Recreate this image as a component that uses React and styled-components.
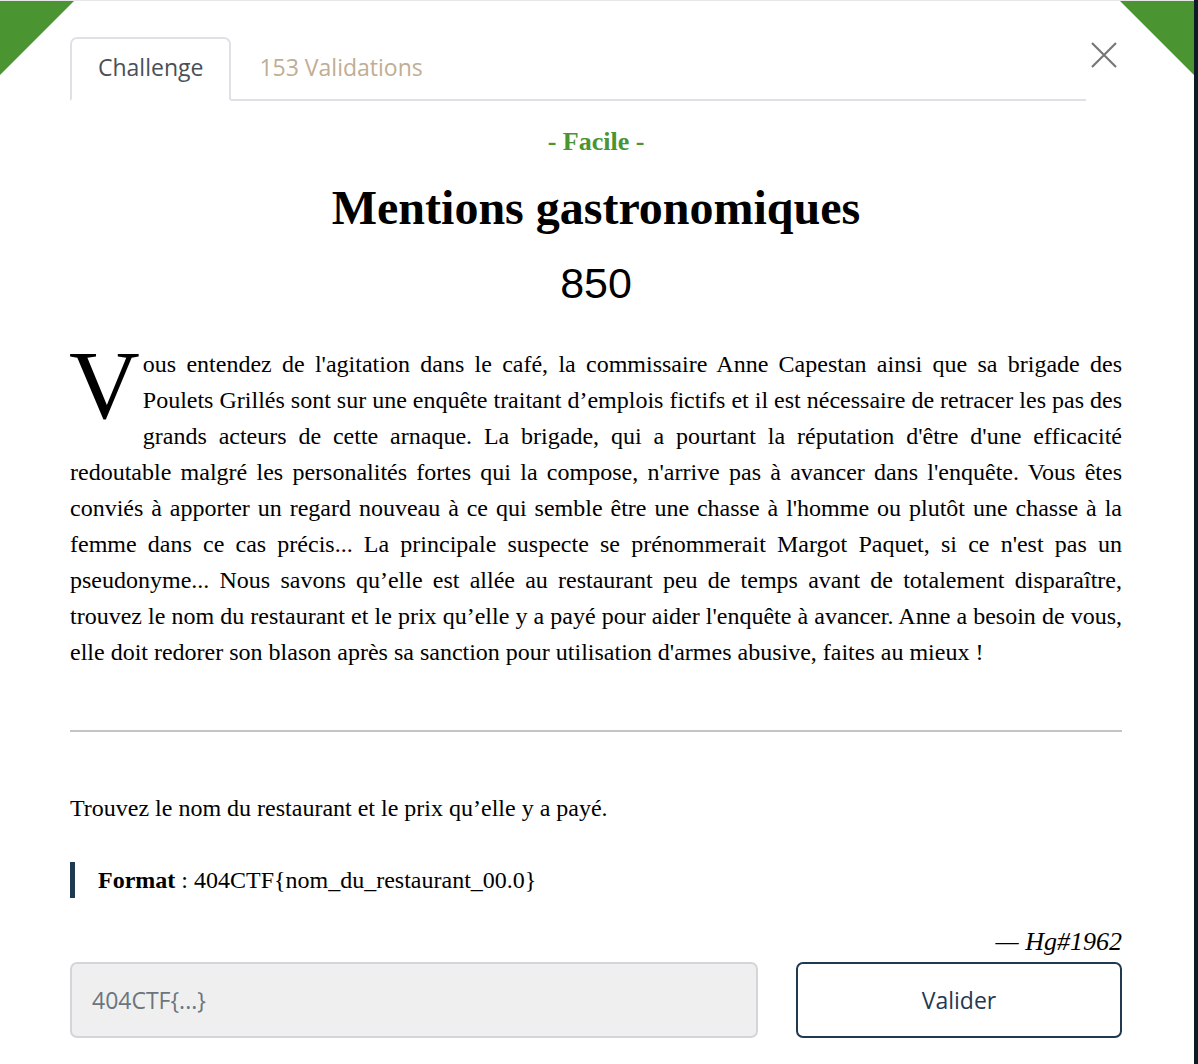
import styled, { createGlobalStyle } from "styled-components";
import { useState } from "react";

const GlobalStyle = createGlobalStyle`
  html, body {
    margin: 0;
    padding: 0;
    background: #0f1b24;
  }
  * {
    box-sizing: border-box;
  }
`;

const green = "#4a9432";
const navy = "#1f3a50";
const uiFont = `"Open Sans", "Noto Sans", sans-serif`;
const serif = `"Liberation Serif", "Times New Roman", serif`;

const Modal = styled.div`
  position: relative;
  width: calc(100% - 4px);
  min-height: 1064px;
  background: #fff;
  border-top: 1px solid #e6e6e6;
  padding: 36px 72px 40px 70px;
  overflow: hidden;
  font-family: ${serif};
  color: #000;
`;

const Corner = styled.div`
  position: absolute;
  top: 0;
  ${(p) => (p.$side === "left" ? "left: 0;" : "right: 0;")}
  width: 74px;
  height: 74px;
  background: ${green};
  clip-path: ${(p) =>
    p.$side === "left"
      ? "polygon(0 0, 100% 0, 0 100%)"
      : "polygon(0 0, 100% 0, 100% 100%)"};
`;

const Header = styled.div`
  display: flex;
  align-items: flex-start;
`;

const TabList = styled.div`
  flex: 1;
  display: flex;
  height: 64px;
  border-bottom: 2px solid #dee2e6;
`;

const Tab = styled.button`
  display: flex;
  align-items: center;
  height: 64px;
  padding: 0 26px 4px;
  margin-bottom: -2px;
  font-family: ${uiFont};
  font-size: 23px;
  cursor: pointer;
  color: ${(p) => (p.$active ? "#495057" : "#bfae93")};
  background: ${(p) => (p.$active ? "#fff" : "transparent")};
  border: 2px solid ${(p) => (p.$active ? "#dee2e6" : "transparent")};
  border-bottom: 2px solid ${(p) => (p.$active ? "#fff" : "transparent")};
  border-radius: 7px 7px 0 0;
`;

const Close = styled.button`
  width: 36px;
  height: 36px;
  display: flex;
  align-items: center;
  justify-content: center;
  background: none;
  border: 0;
  padding: 0;
  cursor: pointer;
`;

const Difficulty = styled.div`
  margin-top: 26px;
  text-align: center;
  color: ${green};
  font-weight: bold;
  font-size: 26px;
  line-height: 30px;
`;

const Title = styled.h1`
  margin: 23px 0 0;
  text-align: center;
  font-size: 48px;
  line-height: 56px;
  font-weight: bold;
`;

const Points = styled.div`
  margin-top: 22px;
  text-align: center;
  font-family: "Liberation Sans", Arial, sans-serif;
  font-size: 43px;
  line-height: 50px;
`;

const Story = styled.p`
  margin: 38px 0 0;
  font-size: 24px;
  line-height: 36px;
  text-align: justify;

  &::first-letter {
    float: left;
    font-size: 98px;
    line-height: 76px;
    margin: 1px 3px 0 -1px;
  }
`;

const Rule = styled.hr`
  margin: 60px 0 0;
  border: 0;
  border-top: 2px solid #c4c4c4;
`;

const Question = styled.p`
  margin: 58px 0 0;
  font-size: 24px;
  line-height: 36px;
`;

const Quote = styled.blockquote`
  margin: 36px 0 0;
  padding-left: 23px;
  border-left: 5px solid ${navy};
  font-family: ${serif};
  font-size: 24px;
  line-height: 36px;
`;

const Author = styled.div`
  margin-top: 26px;
  text-align: right;
  font-style: italic;
  font-size: 26px;
  line-height: 36px;
`;

const AnswerRow = styled.form`
  display: grid;
  grid-template-columns: 1fr 326px;
  gap: 38px;
  margin-top: 2px;
`;

const Input = styled.input`
  height: 76px;
  padding: 0 20px;
  background: #efefef;
  border: 2px solid #d3d6d9;
  border-radius: 7px;
  font-family: ${uiFont};
  font-size: 23px;
  color: #333;
  outline: none;
  &::placeholder {
    color: #6c757d;
  }
`;

const Submit = styled.button`
  height: 76px;
  background: #fff;
  border: 2px solid ${navy};
  border-radius: 7px;
  font-family: ${uiFont};
  font-size: 23px;
  color: ${navy};
  cursor: pointer;
`;

const App = () => {
  const [tab, setTab] = useState("challenge");

  return (
    <>
      <GlobalStyle />
      <Modal>
        <Corner $side="left" />
        <Corner $side="right" />
        <Header>
          <TabList>
            <Tab $active={tab === "challenge"} onClick={() => setTab("challenge")}>
              Challenge
            </Tab>
            <Tab $active={tab === "validations"} onClick={() => setTab("validations")}>
              153 Validations
            </Tab>
          </TabList>
          <Close aria-label="Fermer">
            <svg width="26" height="26" viewBox="0 0 26 26">
              <path d="M1 1L25 25M25 1L1 25" stroke="#777" strokeWidth="2.2" />
            </svg>
          </Close>
        </Header>

        <Difficulty>- Facile -</Difficulty>
        <Title>Mentions gastronomiques</Title>
        <Points>850</Points>

        <Story>
          Vous entendez de l'agitation dans le café, la commissaire Anne Capestan
          ainsi que sa brigade des Poulets Grillés sont sur une enquête traitant
          d’emplois fictifs et il est nécessaire de retracer les pas des grands
          acteurs de cette arnaque. La brigade, qui a pourtant la réputation
          d'être d'une efficacité redoutable malgré les personalités fortes qui
          la compose, n'arrive pas à avancer dans l'enquête. Vous êtes conviés à
          apporter un regard nouveau à ce qui semble être une chasse à l'homme ou
          plutôt une chasse à la femme dans ce cas précis... La principale
          suspecte se prénommerait Margot Paquet, si ce n'est pas un
          pseudonyme... Nous savons qu’elle est allée au restaurant peu de temps
          avant de totalement disparaître, trouvez le nom du restaurant et le prix
          qu’elle y a payé pour aider l'enquête à avancer. Anne a besoin de vous,
          elle doit redorer son blason après sa sanction pour utilisation d'armes
          abusive, faites au mieux !
        </Story>

        <Rule />

        <Question>Trouvez le nom du restaurant et le prix qu’elle y a payé.</Question>

        <Quote>
          <b>Format</b> : 404CTF{"{"}nom_du_restaurant_00.0{"}"}
        </Quote>

        <Author>— Hg#1962</Author>

        <AnswerRow onSubmit={(e) => e.preventDefault()}>
          <Input placeholder="404CTF{...}" />
          <Submit type="submit">Valider</Submit>
        </AnswerRow>
      </Modal>
    </>
  );
};

export default App;
